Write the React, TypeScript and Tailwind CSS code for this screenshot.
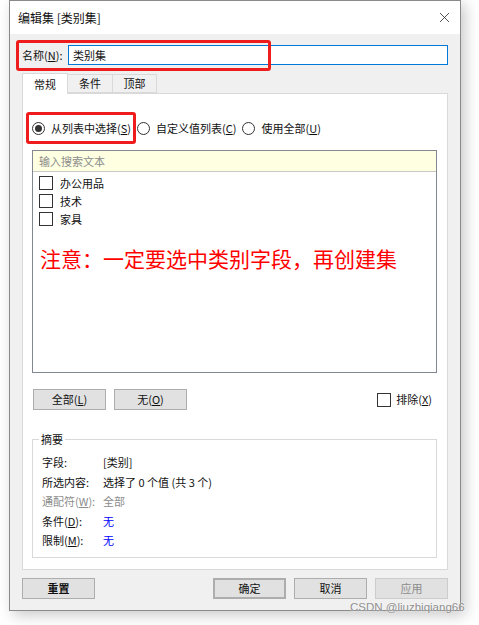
import { X } from 'lucide-react';

const font = { fontFamily: '"Noto Sans CJK SC", "Noto Sans", sans-serif' };

function Radio({ checked, label, k }: { checked?: boolean; label: string; k: string }) {
  return (
    <div className="flex items-center gap-[6px]">
      <span className="flex h-[13px] w-[13px] items-center justify-center rounded-full border border-[#333]">
        {checked && <span className="h-[7px] w-[7px] rounded-full bg-[#333]" />}
      </span>
      <span>
        {label}(<u>{k}</u>)
      </span>
    </div>
  );
}

function Box() {
  return <span className="h-[14px] w-[14px] shrink-0 border border-[#333] bg-white" />;
}

function Btn({ children, className = '' }: { children: React.ReactNode; className?: string }) {
  return (
    <div
      className={`flex h-[21px] w-[73px] items-center justify-center border border-[#adadad] bg-[#e1e1e1] ${className}`}
    >
      {children}
    </div>
  );
}

export default function App() {
  return (
    <div className="relative h-[625px] w-[479px] bg-white text-[11px] text-[#111]" style={font}>
      <div className="ml-[9px] flex h-[611px] w-[452px] flex-col border border-[#8a8a8a] bg-[#f0f0f0] shadow-[4px_4px_14px_rgba(0,0,0,0.22)]">
        {/* title bar */}
        <div className="flex h-[33px] items-center justify-between bg-white pl-[8px] pr-[7px]">
          <span className="text-[12px]">编辑集 [类别集]</span>
          <X size={17} strokeWidth={1.1} className="text-[#222]" />
        </div>

        <div className="flex flex-col px-[12px]">
          {/* name */}
          <div className="mt-[11px] flex h-[20px] items-center">
            <span className="w-[46px]">
              名称(<u>N</u>):
            </span>
            <div className="flex h-[20px] w-[381px] items-center border border-[#0078d7] bg-white pl-[4px]">
              类别集
            </div>
          </div>

          {/* tabs */}
          <div className="mt-[8px] flex h-[20px] items-end">
            <div className="relative z-10 -mb-px flex h-[21px] w-[46px] items-center justify-center border border-b-0 border-[#d9d9d9] bg-white">
              常规
            </div>
            <div className="flex h-[19px] w-[45px] items-center justify-center border border-l-0 border-[#d9d9d9] bg-[#f0f0f0]">
              条件
            </div>
            <div className="flex h-[19px] w-[44px] items-center justify-center border border-l-0 border-[#d9d9d9] bg-[#f0f0f0]">
              顶部
            </div>
          </div>

          {/* panel */}
          <div className="flex h-[477px] w-[426px] flex-col border border-[#d9d9d9] bg-white">
            <div className="mt-[27px] ml-[9px] flex h-[14px] items-center gap-[6px]">
              <Radio checked label="从列表中选择" k="S" />
              <Radio label="自定义值列表" k="C" />
              <Radio label="使用全部" k="U" />
            </div>

            <div className="mt-[15px] ml-[9px] flex h-[223px] w-[405px] flex-col border border-[#828790]">
              <div className="flex h-[21px] items-center border-b border-[#c8c8c8] bg-[#ffffe1] pl-[6px] text-[#8c8c8c]">
                输入搜索文本
              </div>
              <div className="flex flex-col pl-[6px] pt-[2px]">
                {['办公用品', '技术', '家具'].map((t) => (
                  <div key={t} className="flex h-[18px] items-center gap-[7px]">
                    <Box />
                    <span>{t}</span>
                  </div>
                ))}
              </div>
              <div className="mt-[16px] pl-[7px] text-[21px] leading-[28px] text-[#ff0000]">
                注意：一定要选中类别字段，再创建集
              </div>
            </div>

            <div className="mt-[16px] ml-[10px] flex h-[21px] items-center">
              <Btn>
                全部(<u>L</u>)
              </Btn>
              <Btn className="ml-[8px]">
                无(<u>O</u>)
              </Btn>
              <div className="ml-auto mr-[15px] flex items-center gap-[5px]">
                <Box />
                <span>
                  排除(<u>X</u>)
                </span>
              </div>
            </div>

            {/* summary */}
            <div className="relative mt-[29px] ml-[9px] h-[119px] w-[405px] border border-[#d9d9d9]">
              <span className="absolute -top-[9px] left-[6px] bg-white px-[2px] leading-[16px]">摘要</span>
              <div className="grid grid-cols-[61px_1fr] pl-[9px] pt-[13px] leading-[19.5px]">
                <span>字段:</span>
                <span>[类别]</span>
                <span>所选内容:</span>
                <span>选择了 0 个值 (共 3 个)</span>
                <span className="text-[#8c8c8c]">
                  通配符(<u>W</u>):
                </span>
                <span className="text-[#8c8c8c]">全部</span>
                <span>
                  条件(<u>D</u>):
                </span>
                <span className="text-[#0000ff]">无</span>
                <span>
                  限制(<u>M</u>):
                </span>
                <span className="text-[#0000ff]">无</span>
              </div>
            </div>
          </div>

          {/* footer */}
          <div className="mt-[8px] flex h-[21px] items-center">
            <Btn className="font-bold">重置</Btn>
            <Btn className="ml-auto border-2 border-[#0078d7]">确定</Btn>
            <Btn className="ml-[8px]">取消</Btn>
            <Btn className="ml-[8px] border-[#cccccc] bg-[#cccccc] text-[#8c8c8c]">应用</Btn>
          </div>
        </div>
      </div>

      {/* annotations */}
      <div className="absolute left-[16px] top-[40px] h-[31px] w-[255px] rounded-[3px] border-[3px] border-[#ee1c1c]" />
      <div className="absolute left-[26px] top-[112px] h-[32px] w-[110px] rounded-[3px] border-[3px] border-[#ee1c1c]" />
      <span
        className="absolute left-[350px] top-[600px] whitespace-nowrap text-[11.5px] leading-[14px] text-[#8f8f8f]"
        style={{ fontFamily: '"Liberation Sans", sans-serif', textShadow: '0 0 2px #fff' }}
      >
        CSDN @liuzhiqiang66
      </span>
    </div>
  );
}
